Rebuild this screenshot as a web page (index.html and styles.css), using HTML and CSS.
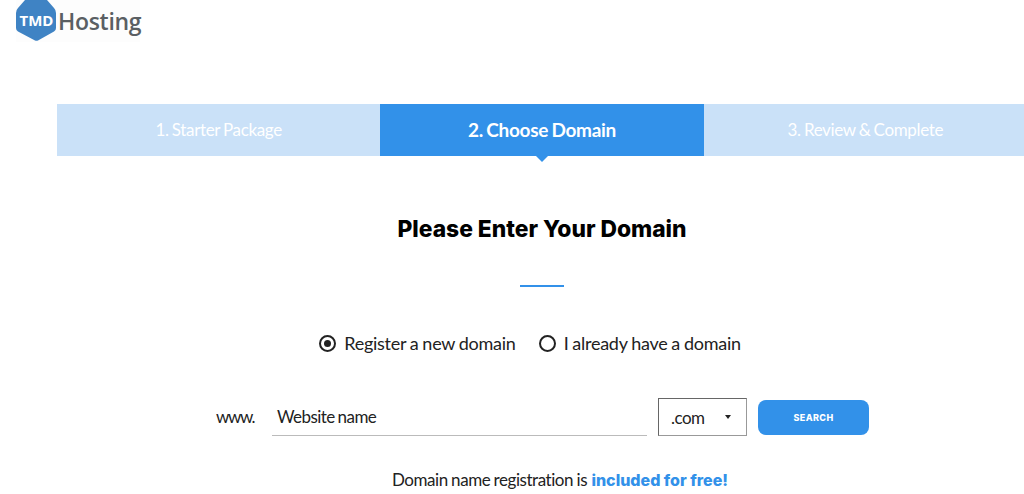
FILE: index.html
```html
<!DOCTYPE html>
<html lang="en">
<head>
  <meta charset="UTF-8" />
  <title>TMDHosting - Choose Domain</title>
  <link rel="stylesheet" href="styles.css">
</head>
<body>
  <header class="logo">
    <svg class="logo-hex" width="41" height="42" viewBox="0 0 41 42">
      <path d="M9 0 L31 0 L38 8 Q40 10 40 13 L40 28 Q40 30.5 38 31.5 L22 40.5 Q20.5 41.2 19 40.5 L2 31.5 Q0 30.5 0 28 L0 13 Q0 10 2 8 Z" fill="#3f83c4"/>
      <text x="20.5" y="26" text-anchor="middle" class="logo-tmd">TMD</text>
    </svg>
    <span class="logo-name">Hosting</span>
  </header>

  <div class="wrap">
    <div class="steps">
      <div class="step">1. Starter Package</div>
      <div class="step active">2. Choose Domain</div>
      <div class="step">3. Review &amp; Complete</div>
    </div>

    <h1>Please Enter Your Domain</h1>
    <div class="divider"></div>

    <div class="radios">
      <label class="radio"><span class="dot checked"></span>Register a new domain</label>
      <label class="radio"><span class="dot"></span>I already have a domain</label>
    </div>

    <div class="search-row">
      <span class="www">www.</span>
      <div class="name-input">Website name</div>
      <div class="tld">.com<span class="caret"></span></div>
      <div class="search-btn">SEARCH</div>
    </div>

    <p class="note"><span class="note-text">Domain name registration is</span> <strong>included for free!</strong></p>
  </div>
</body>
</html>
```

FILE: styles.css
```css
* { box-sizing: border-box; margin: 0; padding: 0; }
html, body {
  height: 494px;
  overflow: hidden;
  background: #fff;
  font-family: 'Lato', sans-serif;
  color: #222;
}
.logo {
  display: flex;
  align-items: center;
  height: 42px;
  margin-left: 16px;
  width: 124px;
  background: #fdfdfd;
}
.logo-hex { display: block; flex: none; }
.logo-tmd {
  font-family: 'Open Sans', sans-serif;
  font-weight: 700;
  font-size: 15px;
  fill: #fff;
}
.logo-name {
  font-family: 'Open Sans', sans-serif;
  font-weight: 600;
  font-size: 23px;
  letter-spacing: -0.3px;
  color: #5a5f63;
  margin-left: 1px;
}
.wrap {
  width: 970px;
  margin: 62px 0 0 57px;
  text-align: center;
}
.steps { display: flex; height: 52px; }
.step {
  flex: 1;
  background: #cae1f8;
  color: #fff;
  font-size: 17px;
  letter-spacing: -0.35px;
  word-spacing: -0.8px;
  line-height: 52px;
}
.step.active {
  position: relative;
  background: #3291e9;
  font-size: 19px;
  font-weight: 700;
  letter-spacing: -0.3px;
  word-spacing: -1px;
}
.step.active::after {
  content: '';
  position: absolute;
  left: 50%;
  top: 100%;
  margin-left: -6px;
  border: 6px solid transparent;
  border-top-color: #3291e9;
  border-bottom: 0;
}
h1 {
  font-family: 'Inter', sans-serif;
  font-weight: 800;
  font-size: 22.8px;
  line-height: 30px;
  color: #000;
  margin-top: 58px;
}
.divider {
  width: 44px;
  height: 2px;
  background: #3291e9;
  margin: 41px auto 0;
}
.radios {
  display: flex;
  justify-content: center;
  gap: 23px;
  margin-top: 43px;
  padding-right: 24px;
  font-size: 18px;
  letter-spacing: -0.25px;
  word-spacing: -0.5px;
  line-height: 26px;
}
.radio { display: flex; align-items: center; }
.dot {
  width: 17px;
  height: 17px;
  border: 2px solid #222;
  border-radius: 50%;
  margin-right: 8px;
  position: relative;
}
.dot.checked::after {
  content: '';
  position: absolute;
  inset: 3px;
  border-radius: 50%;
  background: #222;
}
.search-row {
  display: flex;
  align-items: flex-end;
  margin: 42px 0 0 159px;
  height: 38px;
  font-size: 17px;
  letter-spacing: -0.55px;
  word-spacing: -1px;
}
.www { width: 56px; line-height: 36px; text-align: left; align-self: center; letter-spacing: -1.4px; }
.name-input {
  width: 375px;
  height: 37px;
  padding-left: 5px;
  line-height: 36px;
  text-align: left;
  border-bottom: 1.5px solid #bbb;
}
.tld {
  display: flex;
  align-items: center;
  width: 89px;
  height: 38px;
  margin-left: 11px;
  padding-left: 12px;
  border: 1px solid #666;
  border-right-color: #999;
  border-bottom-color: #999;
}
.caret {
  border: 3px solid transparent;
  border-top: 4px solid #222;
  border-bottom: 0;
  margin-left: 21px;
}
.search-btn {
  align-self: center;
  width: 111px;
  height: 35px;
  margin-left: 11px;
  border-radius: 8px;
  background: #3291e9;
  color: #fff;
  font-family: 'Inter', sans-serif;
  font-weight: 800;
  font-size: 9px;
  letter-spacing: 0.4px;
  word-spacing: 0;
  line-height: 35px;
}
.note {
  margin-top: 32px;
  padding-left: 36px;
  font-size: 17px;
  line-height: 24px;
}
.note-text { letter-spacing: -0.45px; word-spacing: -0.5px; }
.note strong {
  font-family: 'Inter', sans-serif;
  font-weight: 800;
  font-size: 16px;
  color: #3291e9;
}
```
